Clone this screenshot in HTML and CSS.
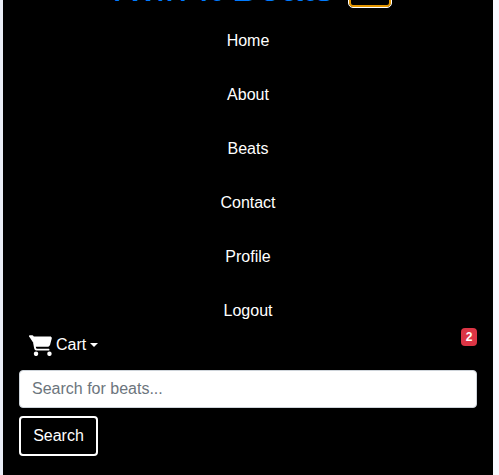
FILE: index.html
```html
<!DOCTYPE html>
<html lang="en">
<head>
<meta charset="utf-8">
<title>Twin It Beats</title>
<link rel="stylesheet" href="styles.css">
</head>
<body>
<nav class="navbar">
  <div class="brand-row">
    <h1 class="brand">Twin It Beats</h1>
    <button class="toggler" aria-label="Toggle navigation"></button>
  </div>
  <ul class="links">
    <li>Home</li>
    <li>About</li>
    <li>Beats</li>
    <li>Contact</li>
    <li>Profile</li>
    <li>Logout</li>
  </ul>
  <div class="cart-row">
    <a class="cart">
      <svg class="cart-icon" viewBox="0 0 576 512" fill="#fff"><path d="M0 24C0 10.700 10.700 0 24 0H69.500c22 0 41.500 12.800 50.600 32h411c26.300 0 45.500 25 38.600 50.400l-41 152.300c-8.500 31.400-37 53.300-69.500 53.300H170.700l5.400 28.500c2.200 11.300 12.100 19.500 23.600 19.500H488c13.300 0 24 10.700 24 24s-10.700 24-24 24H199.700c-34.600 0-64.300-24.600-70.700-58.500L77.400 54.500 120 32H552L510 270H160zM24 0H69.500c22 0 41.500 12.800 50.600 32L77.400 54.500c-.7-3.800-4-6.500-7.900-6.500H24C10.700 48 0 37.300 0 24zM120 464a56 56 0 1 1 112 0 56 56 0 1 1-112 0zm336 0a56 56 0 1 1 112 0 56 56 0 1 1-112 0z"/></svg>
      <span>Cart</span>
      <span class="caret"></span>
    </a>
    <span class="badge">2</span>
  </div>
  <form class="search">
    <input class="field" type="text" placeholder="Search for beats...">
    <button class="submit" type="button">Search</button>
  </form>
</nav>
</body>
</html>
```
FILE: styles.css
```css
* { box-sizing: border-box; }
html { overflow: hidden; }
body {
  margin: 0;
  height: 475px;
  padding: 0 6px 0 3px;
  background: linear-gradient(90deg, #e9edf7 3px, #f8f9ff 3px);
  font: 16px/24px "Liberation Sans", Arial, sans-serif;
  overflow: hidden;
}
.navbar {
  height: 475px;
  padding: 0 16px;
  background: #000;
  color: #fff;
  overflow: hidden;
}
.brand-row {
  display: flex;
  justify-content: center;
  gap: 14px;
  height: 50px;
  margin-top: -36px;
  padding-left: 1px;
}
.brand {
  margin: 0;
  font-size: 40px;
  font-weight: 400;
  line-height: 46px;
  color: #007bff;
  white-space: nowrap;
}
.toggler {
  width: 44px;
  height: 44px;
  padding: 0;
  background: #000;
  border: 1px solid #fff;
  border-radius: 5px;
  box-shadow: inset 0 0 0 2px #e59700;
}
.links {
  height: 314px;
  margin: 0;
  padding: 0;
  list-style: none;
  text-align: center;
}
.links li { height: 54px; padding-top: 15px; }
.cart-row {
  display: flex;
  justify-content: space-between;
  align-items: flex-start;
  height: 32px;
}
.cart {
  display: flex;
  align-items: center;
  padding: 5px 0 0 10px;
}
.cart-icon { width: 23px; height: 21px; margin-right: 4px; }
.caret {
  margin-left: 4px;
  border: 4px solid transparent;
  border-top-color: #fff;
  border-bottom: 0;
}
.badge {
  width: 16px;
  height: 18px;
  border-radius: 4px;
  background: #dc3545;
  font-size: 12px;
  font-weight: 700;
  line-height: 18px;
  text-align: center;
}
.search {
  display: flex;
  flex-direction: column;
  align-items: flex-start;
  gap: 8px;
  margin-top: 10px;
}
.field {
  width: 100%;
  height: 38px;
  padding: 6px 12px;
  border: 1px solid #ced4da;
  border-radius: 4px;
  background: #fff;
  font: inherit;
}
.field::placeholder { color: #6c757d; opacity: 1; }
.submit {
  width: 79px;
  height: 40px;
  padding: 0;
  border: 2px solid #fff;
  border-radius: 4px;
  background: transparent;
  color: #fff;
  font: inherit;
}
```
